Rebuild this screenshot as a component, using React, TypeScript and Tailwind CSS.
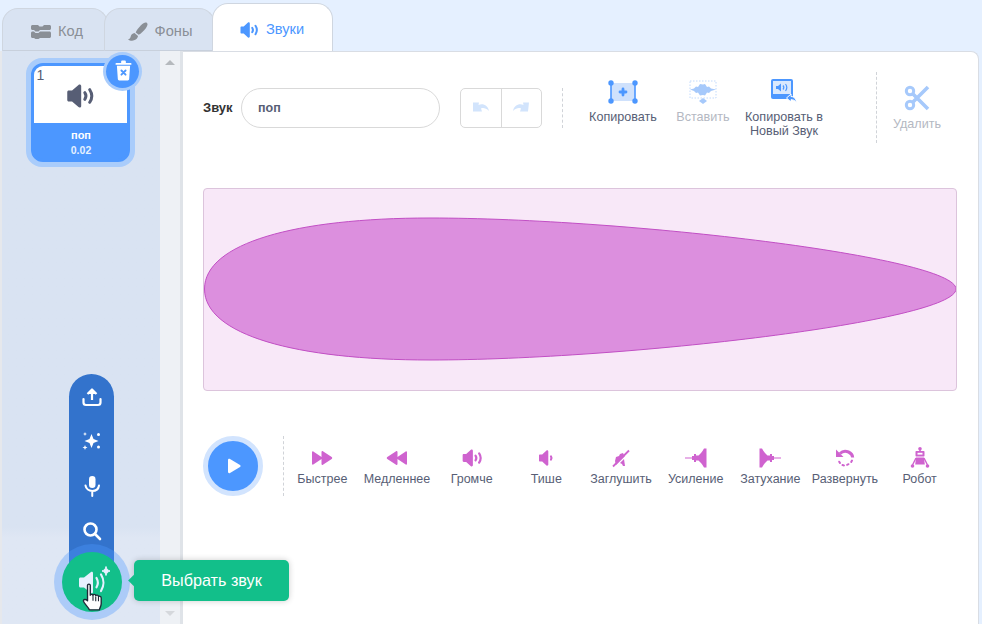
import type { ReactNode } from "react";

function Speaker({ color, className, waves = 2 }: { color: string; className?: string; waves?: number }) {
  return (
    <svg viewBox="0 0 20 20" className={className} fill="none">
      <path d="M1.500 7.400c0-.6.400-1 1-1h2.200l4.300-3.800c.7-.6 1.800-.1 1.800.8v13.200c0 .9-1.100 1.400-1.800.8l-4.300-3.800H2.500c-.6 0-1-.4-1-1z" fill={color} />
      {waves > 0 && <path d="M13.200 7.800c.9 1.300.9 3.100 0 4.400" stroke={color} strokeWidth="2" strokeLinecap="round" />}
      {waves > 1 && <path d="M16.500 5.800c1.700 2.600 1.700 5.800 0 8.400" stroke={color} strokeWidth="2" strokeLinecap="round" />}
    </svg>
  );
}

function Tab({ label, icon, active, className }: { label: string; icon: ReactNode; active?: boolean; className: string }) {
  return (
    <div
      className={[
        "flex items-center justify-center gap-[7px] rounded-t-[16px] border border-[#cfd6e0] pt-[4px] text-[14.6px]",
        active ? "z-20 border-b-0 bg-white text-[#4c97ff]" : "border-b-[#c8d0dc] bg-[#d9e3f2] text-[#8a8f96]",
        className,
      ].join(" ")}
    >
      {icon}
      <span>{label}</span>
    </div>
  );
}

function ToolButton({ label, icon, muted, className }: { label: ReactNode; icon: ReactNode; muted?: boolean; className: string }) {
  return (
    <div className={["flex flex-col items-center whitespace-nowrap text-center text-[12.6px] leading-[14px]", muted ? "text-[#b4b8c2]" : "text-[#575e75]", className].join(" ")}>
      <div className="flex h-[30px] items-end justify-center">{icon}</div>
      <div className="mt-[6px]">{label}</div>
    </div>
  );
}

const pink = "#cf63cf";

const effects: { label: string; icon: ReactNode }[] = [
  {
    label: "Быстрее",
    icon: (
      <svg viewBox="0 0 22 16" className="h-[16px] w-[22px]" fill={pink}>
        <path d="M1 2.300c0-.8.7-1.200 1.300-.8L10.500 7v-5c0-.8.800-1.100 1.400-.7l8.800 5.800c.7.500.7 1.300 0 1.800l-8.800 5.800c-.6.400-1.400.100-1.400-.7V9l-8.200 5.500c-.6.400-1.300 0-1.300-.8z" />
      </svg>
    ),
  },
  {
    label: "Медленнее",
    icon: (
      <svg viewBox="0 0 22 16" className="h-[16px] w-[22px]" fill={pink}>
        <path d="M21 2.300c0-.8-.7-1.200-1.300-.8L11.500 7v-5c0-.8-.8-1.100-1.400-.7L1.300 7.100c-.7.500-.7 1.300 0 1.800l8.800 5.800c.6.400 1.400.100 1.400-.7V9l8.200 5.500c.6.400 1.300 0 1.300-.8z" />
      </svg>
    ),
  },
  { label: "Громче", icon: <Speaker color={pink} className="h-[22px] w-[22px]" /> },
  {
    label: "Тише",
    icon: (
      <svg viewBox="0 0 16 20" className="h-[20px] w-[16px]" fill="none">
        <path d="M1 7.400c0-.6.400-1 1-1h2.200l4.300-3.800c.7-.6 1.800-.1 1.800.8v13.200c0 .9-1.100 1.400-1.800.8l-4.300-3.800H2c-.6 0-1-.4-1-1z" fill={pink} />
        <path d="M13 8.500c.6.900.6 2.100 0 3" stroke={pink} strokeWidth="2.200" strokeLinecap="round" />
      </svg>
    ),
  },
  {
    label: "Заглушить",
    icon: (
      <svg viewBox="0 0 18 19" className="h-[19px] w-[18px]" fill="none">
        <path d="M3 12l1-4 3-1 1-2 3-1 1 2 1 1-9 9z" fill={pink} />
        <path d="M8 14l4-4 1 7h-2l-1-2z" fill={pink} />
        <path d="M1 17.500L17 1.500" stroke={pink} strokeWidth="1.800" />
      </svg>
    ),
  },
  {
    label: "Усиление",
    icon: (
      <svg viewBox="0 0 22 20" className="h-[20px] w-[22px]" fill={pink}>
        <path d="M0 9.500H7V8H9V6H11V7.500H13.500L16 5L17.500 3L19 .5H21.500V19.500H19L17.500 17L16 15L13.500 12.500H11V14H9V12H7V10.500H0z" />
      </svg>
    ),
  },
  {
    label: "Затухание",
    icon: (
      <svg viewBox="0 0 22 20" className="h-[20px] w-[22px]" fill={pink}>
        <path d="M22 9.500H15V8H13V6H11V7.500H8.500L6 5L4.500 3L3 .5H.5V19.500H3L4.500 17L6 15L8.500 12.500H11V14H13V12H15V10.500H22z" />
      </svg>
    ),
  },
  {
    label: "Развернуть",
    icon: (
      <svg viewBox="0 0 20 20" className="h-[20px] w-[20px]" fill="none">
        <path d="M1 1.500v7.500h7.500z" fill={pink} />
        <path d="M5 5.500c2-2 5.500-2.700 8.500-1.500 2.500 1 4 3 4.200 5.500" stroke={pink} strokeWidth="3" />
        <path d="M17 12.500l-.8 1.400M13.500 16.200l-1.400.6M9 17.400l-1.500-.3M5 15l-.8-1.300" stroke={pink} strokeWidth="2" strokeLinecap="round" />
      </svg>
    ),
  },
  {
    label: "Робот",
    icon: (
      <svg viewBox="0 0 20 22" className="h-[22px] w-[20px]" fill={pink}>
        <circle cx="10" cy="1.800" r="1.800" />
        <path d="M9.200 2h1.600v2h-1.600z" />
        <path d="M6.500 4h7c.6 0 1 .4 1 1v3.500c0 .6-.4 1-1 1h-7c-.6 0-1-.4-1-1V5c0-.6.400-1 1-1z" />
        <path d="M6 10.500h8l.8 7H5.200z" />
        <rect x="7.500" y="5.800" width="5" height="1.800" fill="#fff" />
        <path d="M6 11L2.500 18M14 11l3.500 7" stroke={pink} strokeWidth="1.400" />
        <circle cx="2.500" cy="19" r="1.800" />
        <circle cx="17.500" cy="19" r="1.800" />
      </svg>
    ),
  },
];

export default function App() {
  return (
    <div className="relative flex h-[624px] w-[982px] flex-col overflow-hidden bg-[#e5f0ff] font-['Liberation_Sans',Arial,sans-serif]">
      <div className="flex h-[51px] items-end pl-[2px]">
        <Tab
          label="Код"
          className="z-0 h-[43px] w-[106px] pl-[4px]"
          icon={
            <svg viewBox="0 0 20 14" className="h-[14px] w-[20px]" fill="#8a8f96">
              <path d="M0 1.500C0 .7.700 0 1.500 0H7l1.500 1.500h3L13 0h5.500c.8 0 1.500.7 1.500 1.500v2c0 .8-.7 1.500-1.500 1.500H9L7.500 6.500h-3L3 5H1.500C.7 5 0 4.300 0 3.500z" />
              <path d="M0 8c0-.8.700-1.500 1.500-1.500H3L4.500 8h3L9 6.500h9.500c.8 0 1.500.7 1.500 1.500v3.500c0 .8-.7 1.500-1.500 1.500H9l-1.500 1h-3L3 13H1.500C.7 13 0 12.300 0 11.500z" />
            </svg>
          }
        />
        <Tab
          label="Фоны"
          className="z-10 -ml-[4px] h-[43px] w-[111px] pl-[1px]"
          icon={
            <svg viewBox="0 0 20 20" className="h-[20px] w-[20px]" fill="#8a8f96">
              <path d="M19 1c-1.500-1-3.500-.2-6 2.300C10.500 5.800 8.500 8.500 7.700 10.500l3 2.300C13 11.500 15.800 9 17.800 6.200 19.500 3.800 20 2 19 1z" />
              <path d="M6.500 11c-2.200.2-3.500 1.700-3.800 3.400-.3 1.500-1.200 2.500-2.700 3 2 1.500 5.500 1.700 7.800.2 1.500-1 2-2.500 2.200-3.600z" />
            </svg>
          }
        />
        <Tab
          label="Звуки"
          active
          className="-ml-[3px] h-[48px] w-[121px] pr-[2px]"
          icon={<Speaker color="#4c97ff" className="h-[20px] w-[20px]" />}
        />
      </div>

      <div className="flex min-h-0 flex-1">
        <div className="flex w-[183px] shrink-0 border-l-2 border-[#e6e8ec]">
          <div className="flex w-[158px] justify-center bg-linear-to-b from-[#d9e3f2] from-[83%] to-[#dfe7f4] to-[85%] pt-[7px]">
            <div className="h-[109px] w-[109px] -translate-x-[1px] rounded-[16px] border-[5px] border-[#a9ccfb] bg-[#a9ccfb]">
              <div className="flex h-[99px] flex-col overflow-hidden rounded-[12px] border-[3px] border-[#4c97ff] bg-[#4c97ff]">
                <div className="relative flex h-[57px] shrink-0 items-center justify-center bg-white pt-[2px]">
                  <span className="absolute left-[3px] top-[1px] text-[14px] leading-[16px] text-[#575e75]">1</span>
                  <Speaker color="#575e75" className="h-[30px] w-[30px]" />
                </div>
                <div className="mt-[5px] pl-[2px] text-center text-[11px] font-bold leading-[14px] text-white">поп</div>
                <div className="mt-[2px] pl-[2px] text-center text-[10.5px] font-bold leading-[12px] text-[#e5f0ff]">0.02</div>
              </div>
            </div>
          </div>
          <div className="flex w-[20px] flex-col items-center justify-between bg-[#eef1f5] pb-[8px] pt-[9px]">
            <div className="h-0 w-0 border-x-[5px] border-b-[5px] border-x-transparent border-b-[#b5b9bd]" />
            <div className="h-0 w-0 border-x-[5px] border-t-[5px] border-x-transparent border-t-[#d5d8dc]" />
          </div>
          <div className="w-[3px] bg-[#dfe3e8]" />
        </div>

        <div className="mr-[3px] flex-1 rounded-tr-[8px] border-r border-t border-[#d9dde4] bg-white pl-[20px] pr-[21px]">
          <div className="flex h-[136px] items-start">
            <div className="mt-[36px] flex items-center">
              <span className="w-[38px] text-[13px] font-bold text-[#333]">Звук</span>
              <div className="flex h-[40px] w-[199px] items-center rounded-full border border-[#d9d9d9] pl-[16px] text-[12.5px] font-bold text-[#575e75]">поп</div>
              <div className="ml-[20px] flex h-[40px] w-[82px] rounded-[5px] border border-[#d9d9d9]">
                <div className="flex flex-1 items-center justify-center border-r border-[#d9d9d9]">
                  <svg viewBox="0 0 18 14" className="h-[14px] w-[18px]" fill="#d2e4fc">
                    <path d="M1 1.500h6l-.5 2.500C11 2 16 4.500 17 10c-3-3-6-3.500-8-2.500l1 3H1z" />
                  </svg>
                </div>
                <div className="flex flex-1 items-center justify-center">
                  <svg viewBox="0 0 18 14" className="h-[14px] w-[18px]" fill="#d2e4fc">
                    <path d="M17 1.500h-6l.5 2.500C7 2 2 4.500 1 10c3-3 6-3.500 8-2.500l-1 3h8z" />
                  </svg>
                </div>
              </div>
              <div className="ml-[20px] h-[40px] border-l border-dashed border-[#d0d3d8]" />
            </div>
            <ToolButton
              className="ml-[26px] mt-[22px] w-[68px] shrink-0"
              label="Копировать"
              icon={
                <svg viewBox="0 0 30 24" className="h-[24px] w-[30px]">
                  <rect x="3" y="3" width="24" height="18" fill="#cfe1fc" />
                  <path d="M3 3v18M27 3v18" stroke="#4c97ff" strokeWidth="1.600" />
                  <path d="M15 9v6M12 12h6" stroke="#4c97ff" strokeWidth="2.800" strokeLinecap="round" />
                  <circle cx="3" cy="3" r="2.700" fill="#4c97ff" />
                  <circle cx="27" cy="3" r="2.700" fill="#4c97ff" />
                  <circle cx="3" cy="21" r="2.700" fill="#4c97ff" />
                  <circle cx="27" cy="21" r="2.700" fill="#4c97ff" />
                </svg>
              }
            />
            <ToolButton
              muted
              className="ml-[12px] mt-[22px] w-[68px] shrink-0"
              label="Вставить"
              icon={
                <svg viewBox="0 0 28 24" className="h-[24px] w-[28px]">
                  <rect x="1" y="1" width="26" height="17" fill="none" stroke="#c2dafc" strokeDasharray="1.500 1.500" />
                  <path d="M1 9.500l4-1 2-2 2 .500 2-3 3 .500 2-.500 2 3 2-.500 2 2 5 1-5 1.500-2 2-2-.500-2 3-2-.500-3 .500-2-3-2 .500-2-2z" fill="#a6c9fb" />
                  <path d="M14 18l4 3-4 3-4-3z" fill="#a6c9fb" />
                </svg>
              }
            />
            <ToolButton
              className="ml-[4px] mt-[22px] w-[86px] shrink-0"
              label={<>Копировать в<br />Новый Звук</>}
              icon={
                <svg viewBox="0 0 26 25" className="h-[25px] w-[26px]" fill="none">
                  <path d="M2 0h18a2 2 0 0 1 2 2v18H2a2 2 0 0 1-2-2V2a2 2 0 0 1 2-2z" fill="#4c97ff" />
                  <rect x="2" y="2" width="18" height="13" fill="#d9e8fd" />
                  <path d="M5 7h2l3-2.500v8L7 10H5z" fill="#4c97ff" />
                  <path d="M12 6.500c1 1.200 1 2.800 0 4M14.500 5c1.500 2 1.500 5 0 7" stroke="#4c97ff" strokeWidth="1.200" />
                  <path d="M15.500 19l4.500-4v2.500c3 0 5 2 5.500 6-1.500-2-3-2.800-5.500-2.800V23z" fill="#4c97ff" stroke="#fff" strokeWidth="1" />
                </svg>
              }
            />
            <div className="ml-[49px] mt-[20px] h-[71px] border-l border-dashed border-[#d0d3d8]" />
            <ToolButton
              muted
              className="ml-[8px] mt-[29px] w-[64px] shrink-0"
              label="Удалить"
              icon={
                <svg viewBox="0 0 26 26" className="h-[26px] w-[26px]" fill="none" stroke="#a6c9fb">
                  <circle cx="6" cy="6" r="3.700" strokeWidth="3" />
                  <circle cx="6" cy="20" r="3.700" strokeWidth="3" />
                  <path d="M9 9l15 15M9 17L24 2" strokeWidth="3.600" />
                </svg>
              }
            />
          </div>

          <div className="h-[203px] overflow-hidden rounded-[4px] border border-[#dcc4dc] bg-[#f8e8f8]">
            <svg viewBox="0 0 752 201" className="h-[201px] w-[752px]">
              <path
                d="M0.500 100C0.500 54 92 29 226 29C420 29 752 68 752 100C752 132 420 171 226 171C92 171 0.500 146 0.500 100Z"
                fill="#dc8fde"
                stroke="#c14fc4"
                strokeWidth="1"
              />
            </svg>
          </div>

          <div className="mt-[45px] flex items-start">
            <button className="flex h-[60px] w-[60px] shrink-0 items-center justify-center rounded-full border-[5px] border-[#d2e4fe] bg-[#4c97ff]">
              <svg viewBox="0 0 14 16" className="ml-[2px] h-[16px] w-[14px]" fill="#fff"><path d="M1 2c0-1 1-1.500 2-1l10 6c.8.500.8 1.500 0 2L3 15c-1 .5-2 0-2-1z" /></svg>
            </button>
            <div className="ml-[20px] h-[60px] border-l border-dashed border-[#d0d3d8]" />
            <div className="ml-[1px] grid flex-1 grid-cols-9 pt-[12px]">
              {effects.map((effect) => (
                <div key={effect.label} className="flex flex-col items-center whitespace-nowrap text-[12.5px] leading-[14px] text-[#575e75]">
                  <div className="flex h-[20px] items-center">{effect.icon}</div>
                  <div className="mt-[4px]">{effect.label}</div>
                </div>
              ))}
            </div>
          </div>
        </div>
      </div>

      <div className="absolute left-[106px] top-[55px] flex h-[33px] w-[33px] items-center justify-center rounded-full bg-[#4c97ff] ring-[3px] ring-[#a9ccfb]">
        <svg viewBox="0 0 18 22" className="-mt-[3px] ml-[1px] h-[21px] w-[17px]" fill="#fff">
          <path d="M6.500 1.500c0-.6.400-1 1-1h3c.6 0 1 .4 1 1V3h5c.6 0 1 .4 1 1s-.4 1-1 1h-15c-.6 0-1-.4-1-1s.4-1 1-1h5z" />
          <path d="M2 6h14l-1 14c0 .8-.7 1.500-1.500 1.500h-9C3.700 21.500 3 20.800 3 20z" />
          <path d="M6.800 11l4.400 4.400M11.200 11l-4.400 4.400" stroke="#4c97ff" strokeWidth="2" strokeLinecap="round" />
        </svg>
      </div>

      <div className="absolute left-[69px] top-[374px] flex h-[216px] w-[45px] flex-col items-center gap-[24px] rounded-t-full bg-[#3373cc] pt-[13px]">
        <svg viewBox="0 0 20 20" className="h-[20px] w-[20px] shrink-0" fill="none" stroke="#fff" strokeWidth="2.200">
          <path d="M10 13V3M5.500 7L10 2.500 14.500 7" fill="#fff" strokeLinejoin="round" />
          <path d="M1.500 12v3.500c0 1.400 1 2.500 2.500 2.500h12c1.500 0 2.500-1.100 2.500-2.500V12" strokeLinecap="round" />
        </svg>
        <svg viewBox="0 0 20 20" className="h-[20px] w-[20px] shrink-0" fill="#fff">
          <path d="M9.500 3l2 5 5 2-5 2-2 5-2-5-5-2 5-2z" />
          <circle cx="16.500" cy="3.500" r="1.500" />
          <circle cx="16.500" cy="16" r="1.500" />
          <path d="M3 14l.7 1.800 1.800.7-1.800.7L3 19l-.7-1.800-1.800-.7 1.800-.7zM3 1l.6 1.400L5 3l-1.400.6L3 5l-.6-1.400L1 3l1.400-.6z" />
        </svg>
        <svg viewBox="0 0 20 22" className="h-[22px] w-[20px] shrink-0" fill="none">
          <rect x="7" y="1" width="6.500" height="12" rx="3.250" fill="#fff" />
          <path d="M3.500 10.500c.5 3.500 3.500 5.500 6.800 5.500s6.200-2 6.700-5.500M10.250 16v5" stroke="#fff" strokeWidth="2" strokeLinecap="round" />
        </svg>
        <svg viewBox="0 0 20 20" className="h-[20px] w-[20px] shrink-0" fill="none" stroke="#fff" strokeWidth="2.600">
          <circle cx="8.500" cy="8.500" r="6" />
          <path d="M13 13l5 5" strokeLinecap="round" />
        </svg>
      </div>

      <div className="absolute left-[62px] top-[552px] flex h-[60px] w-[60px] items-center justify-center rounded-full bg-[#12bf8a] ring-8 ring-[#4c97ff]/35">
        <svg viewBox="0 0 36 36" className="ml-[6px] h-[36px] w-[36px]" fill="none">
          <path d="M2 15c0-.8.700-1.500 1.500-1.500H7l7-5.500c.8-.6 2-.1 2 1v19c0 1.100-1.200 1.600-2 1l-7-5.500H3.500c-.8 0-1.500-.7-1.500-1.500z" fill="#e6f0ff" />
          <path d="M19.500 14c1.600 2.800 1.600 6.500 0 9.300M24 10.500c3.200 5 3.200 11.500 0 16.500" stroke="#e6f0ff" strokeWidth="2.200" strokeLinecap="round" />
          <path d="M29 2.500c.5 2.500 1.500 3.500 4 4.500-2.500 1-3.500 2-4 4.500-.5-2.500-1.500-3.500-4-4.500 2.500-1 3.500-2 4-4.500z" fill="#e6f0ff" stroke="#e6f0ff" strokeWidth="1" strokeLinejoin="round" />
        </svg>
      </div>
      <svg viewBox="0 0 24 34" className="absolute left-[82px] top-[582px] h-[31px] w-[22px]">
        <path
          d="M6 3.500c0-1.500 3-1.500 3 0v11c0-1 2.500-1.500 3 0 0-1 3-1.500 3 .5 .500-1 3-1 3 1 .500-.8 3-.5 3 1.500v6c0 3-1.500 4.500-2 7H8c-1-3-6-7-6.500-9.500-.3-2 2.500-2.500 4.500-.5z"
          fill="#fff"
          stroke="#1f2937"
          strokeWidth="1.500"
          strokeLinejoin="round"
        />
        <path d="M12 14.500v6M15 16v5M18 16.500v4.500" stroke="#1f2937" strokeWidth="1.200" />
      </svg>

      <div className="absolute left-[134px] top-[560px] flex h-[41px] w-[155px] items-center justify-center rounded-[5px] bg-[#12bf8a] text-[16.2px] text-white shadow-[0_0_6px_rgba(0,0,0,0.2)]">
        <div className="absolute -left-[4px] top-[16px] h-[9px] w-[9px] rotate-45 bg-[#12bf8a]" />
        Выбрать звук
      </div>
    </div>
  );
}
